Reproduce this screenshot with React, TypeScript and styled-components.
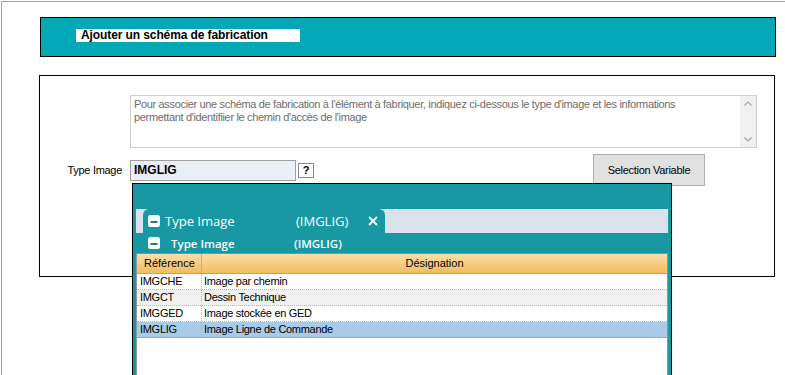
import React from "react";
import styled, { createGlobalStyle } from "styled-components";

const GlobalStyle = createGlobalStyle`
  html, body {
    margin: 0;
    padding: 0;
    background: #ffffff;
    overflow: hidden;
  }
  body {
    font-family: "Liberation Sans", Arial, sans-serif;
  }
`;

const Frame = styled.div`
  margin: 1px 0 0 1px;
  height: 374px;
  border-top: 1px solid #a0a0a0;
  border-left: 1px solid #a0a0a0;
  box-sizing: border-box;
`;

const HeaderBar = styled.div`
  margin: 15px 0 0 38px;
  width: 736px;
  height: 40px;
  box-sizing: border-box;
  border: 1px solid #000;
  background: #02a8b5;
  padding: 11px 0 0 35px;
`;

const Title = styled.div`
  width: 224px;
  height: 13px;
  box-sizing: border-box;
  background: #fff;
  padding-left: 5px;
  font-size: 12px;
  font-weight: bold;
  line-height: 13px;
  color: #000;
  letter-spacing: -0.1px;
  white-space: nowrap;
`;

const Panel = styled.div`
  position: relative;
  margin: 18px 0 0 37px;
  width: 736px;
  height: 202px;
  box-sizing: border-box;
  border: 1px solid #000;
`;

const Memo = styled.div`
  margin: 19px 0 0 90px;
  width: 627px;
  height: 53px;
  box-sizing: border-box;
  border: 1px solid #cfcfcf;
  display: flex;
`;

const MemoText = styled.div`
  flex: 1;
  padding: 2px 0 0 3px;
  font-size: 11px;
  line-height: 13px;
  letter-spacing: -0.34px;
  color: #6d6d6d;
  white-space: nowrap;
`;

const ScrollBar = styled.div`
  width: 16px;
  background: #f0f0f0;
  display: flex;
  flex-direction: column;
  justify-content: space-between;
  align-items: center;
  padding: 5px 0 5px;
`;

const FieldRow = styled.div`
  margin-top: 6px;
  height: 32px;
  display: flex;
  align-items: center;
`;

const FieldLabel = styled.div`
  width: 82px;
  text-align: right;
  font-size: 11px;
  letter-spacing: -0.3px;
  color: #000;
  margin-right: 8px;
`;

const CodeInput = styled.div`
  width: 166px;
  height: 21px;
  box-sizing: border-box;
  border: 1px solid #a0a0a0;
  background: #e9eff9;
  padding-left: 3px;
  font-size: 12px;
  font-weight: bold;
  line-height: 19px;
  color: #000;
`;

const HelpButton = styled.div`
  margin-left: 2px;
  width: 16px;
  height: 15px;
  box-sizing: border-box;
  border: 1px solid #8c8c8c;
  background: #fff;
  font-size: 11px;
  font-weight: bold;
  line-height: 13px;
  text-align: center;
  color: #000;
`;

const SelectButton = styled.div`
  margin-left: 279px;
  width: 112px;
  height: 32px;
  box-sizing: border-box;
  border: 1px solid #adadad;
  background: #e1e1e1;
  font-size: 11px;
  letter-spacing: -0.3px;
  line-height: 30px;
  text-align: center;
  color: #000;
`;

const Popup = styled.div`
  position: absolute;
  left: 92px;
  top: 107px;
  width: 540px;
  height: 200px;
  box-sizing: border-box;
  border: 1px solid #000;
  background: #1898a2;
  padding: 25px 3px 0 3px;
  display: flex;
  flex-direction: column;
`;

const TabStrip = styled.div`
  height: 24px;
  background: #d9e3ec;
  padding-left: 7px;
  display: flex;
  align-items: flex-end;
`;

const Tab = styled.div`
  width: 242px;
  height: 24px;
  background: #1898a2;
  border-radius: 6px 6px 0 0;
  display: flex;
  align-items: center;
  padding-left: 5px;
  box-sizing: border-box;
  font-family: "Open Sans", sans-serif;
  font-size: 13px;
  font-weight: 500;
  color: #fff;
  white-space: nowrap;
`;

const SubBar = styled.div`
  height: 20px;
  display: flex;
  align-items: center;
  padding-left: 12px;
  font-family: "Open Sans", sans-serif;
  font-size: 11.5px;
  font-weight: 600;
  color: #fff;
  white-space: nowrap;
`;

const Caption = styled.span<{ $width: number; $gap: number }>`
  display: inline-block;
  width: ${(p) => p.$width}px;
  margin-left: ${(p) => p.$gap}px;
`;

const Grid = styled.div`
  flex: 1;
  background: #fff;
  border-left: 1px solid #8a9aa4;
  border-right: 1px solid #8a9aa4;
  border-top: 1px solid #7f8f99;
`;

const HeadRow = styled.div`
  display: flex;
  height: 20px;
  box-sizing: border-box;
  background: linear-gradient(#fadfab, #f3bc5e);
  border-bottom: 1px solid #e69a35;
  font-size: 11px;
  color: #000;
`;

const HeadCell = styled.div<{ $width?: number; $center?: boolean }>`
  ${(p) => (p.$width ? `width: ${p.$width}px;` : "flex: 1;")}
  box-sizing: border-box;
  line-height: 19px;
  text-align: ${(p) => (p.$center ? "center" : "left")};
  padding-left: ${(p) => (p.$center ? 0 : 7)}px;
  border-right: ${(p) => (p.$width ? "1px solid #e3a650" : "none")};
`;

const Row = styled.div<{ $alt?: boolean; $selected?: boolean }>`
  display: flex;
  height: 16px;
  box-sizing: border-box;
  background: ${(p) => (p.$selected ? "#a9cbe7" : p.$alt ? "#f0f0f0" : "#fff")};
  border-bottom: 1px ${(p) => (p.$selected ? "solid #9aa8b8" : "dotted #b8b8b8")};
  font-size: 11px;
  letter-spacing: -0.3px;
  color: #000;
`;

const Cell = styled.div<{ $width?: number }>`
  ${(p) => (p.$width ? `width: ${p.$width}px;` : "flex: 1;")}
  box-sizing: border-box;
  line-height: 15px;
  padding-left: ${(p) => (p.$width ? 3 : 2)}px;
  border-right: ${(p) => (p.$width ? "1px dotted #b8b8b8" : "none")};
  white-space: nowrap;
`;

const Chevron = ({ up }: { up?: boolean }) => (
  <svg width="8" height="5" viewBox="0 0 8 5">
    <path
      d={up ? "M0.5 4.5 L4 1 L7.5 4.5" : "M0.5 0.5 L4 4 L7.5 0.5"}
      fill="none"
      stroke="#a6a6a6"
      strokeWidth="1.2"
    />
  </svg>
);

const CollapseIcon = () => (
  <svg width="12" height="12" viewBox="0 0 12 12">
    <rect x="0" y="0" width="12" height="12" rx="2.5" fill="#ffffff" />
    <rect x="2.5" y="6" width="7" height="2" fill="#1a7f88" />
  </svg>
);

const CloseIcon = () => (
  <svg width="10" height="10" viewBox="0 0 10 10" style={{ marginLeft: 20 }}>
    <path d="M1 1 L9 9 M9 1 L1 9" stroke="#ffffff" strokeWidth="1.8" />
  </svg>
);

const rows = [
  { code: "IMGCHE", label: "Image par chemin" },
  { code: "IMGCT", label: "Dessin Technique" },
  { code: "IMGGED", label: "Image stockée en GED" },
  { code: "IMGLIG", label: "Image Ligne de Commande" },
];

export default function App() {
  return (
    <>
      <GlobalStyle />
      <Frame>
        <HeaderBar>
          <Title>Ajouter un schéma de fabrication</Title>
        </HeaderBar>
        <Panel>
          <Memo>
            <MemoText>
              Pour associer une schéma de fabrication à l'élément à fabriquer, indiquez ci-dessous le type
              d'image et les informations
              <br />
              permettant d'identifiier le chemin d'accès de l'image
            </MemoText>
            <ScrollBar>
              <Chevron up />
              <Chevron />
            </ScrollBar>
          </Memo>
          <FieldRow>
            <FieldLabel>Type Image</FieldLabel>
            <CodeInput>IMGLIG</CodeInput>
            <HelpButton>?</HelpButton>
            <SelectButton>Selection Variable</SelectButton>
          </FieldRow>
          <Popup>
            <TabStrip>
              <Tab>
                <CollapseIcon />
                <Caption $width={131} $gap={5}>Type Image</Caption>
                <span>(IMGLIG)</span>
                <CloseIcon />
              </Tab>
            </TabStrip>
            <SubBar>
              <CollapseIcon />
              <Caption $width={123} $gap={11}>Type Image</Caption>
              <span>(IMGLIG)</span>
            </SubBar>
            <Grid>
              <HeadRow>
                <HeadCell $width={65}>Référence</HeadCell>
                <HeadCell $center>Désignation</HeadCell>
              </HeadRow>
              {rows.map((r, i) => (
                <Row key={r.code} $alt={i === 1} $selected={r.code === "IMGLIG"}>
                  <Cell $width={65}>{r.code}</Cell>
                  <Cell>{r.label}</Cell>
                </Row>
              ))}
            </Grid>
          </Popup>
        </Panel>
      </Frame>
    </>
  );
}
